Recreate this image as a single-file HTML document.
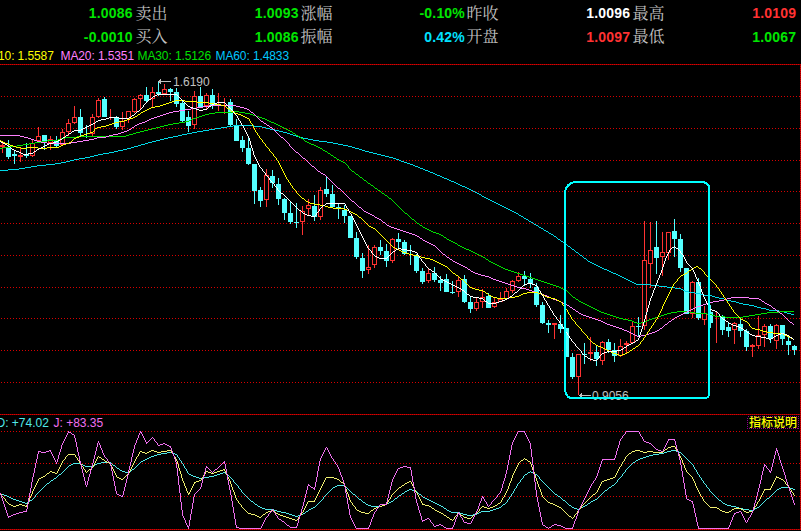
<!DOCTYPE html>
<html lang="zh"><head><meta charset="utf-8"><title>K线图</title>
<style>
html,body{margin:0;padding:0;background:#000;overflow:hidden}
svg{display:block}
.n{font-family:"Liberation Sans",sans-serif;font-weight:bold;font-size:14px;letter-spacing:0.2px}
.l{font-family:"Liberation Serif","Noto Serif CJK SC",serif;font-size:16px;fill:#c0c0c0}
.m{font-family:"Liberation Sans",sans-serif;font-size:12px}
.g{shape-rendering:crispEdges}
.ma{fill:none;stroke-width:1;shape-rendering:crispEdges}
</style></head><body>
<svg width="801" height="531" viewBox="0 0 801 531">
<rect width="801" height="531" fill="#000"/>
<g class="g" stroke="#d80000" stroke-width="1" fill="none">
<path stroke="#900000" d="M0 64.5H801M0 414.5H801M0 529.5H801M800.5 64V530"/>
<line x1="0" y1="64.5" x2="801" y2="64.5" stroke-dasharray="1 1"/>
<line x1="0" y1="96.5" x2="801" y2="96.5" stroke-dasharray="1 2" stroke-dashoffset="2"/>
<line x1="0" y1="128.5" x2="801" y2="128.5" stroke-dasharray="1 2" stroke-dashoffset="2"/>
<line x1="0" y1="160.5" x2="801" y2="160.5" stroke-dasharray="1 2" stroke-dashoffset="2"/>
<line x1="0" y1="191.5" x2="801" y2="191.5" stroke-dasharray="1 2" stroke-dashoffset="2"/>
<line x1="0" y1="223.5" x2="801" y2="223.5" stroke-dasharray="1 2" stroke-dashoffset="2"/>
<line x1="0" y1="255.5" x2="801" y2="255.5" stroke-dasharray="1 2" stroke-dashoffset="2"/>
<line x1="0" y1="287.5" x2="801" y2="287.5" stroke-dasharray="1 2" stroke-dashoffset="2"/>
<line x1="0" y1="318.5" x2="801" y2="318.5" stroke-dasharray="1 2" stroke-dashoffset="2"/>
<line x1="0" y1="350.5" x2="801" y2="350.5" stroke-dasharray="1 2" stroke-dashoffset="2"/>
<line x1="0" y1="382.5" x2="801" y2="382.5" stroke-dasharray="1 2" stroke-dashoffset="2"/>
<line x1="0" y1="414.5" x2="801" y2="414.5" stroke-dasharray="1 1"/>
<line x1="0" y1="431.5" x2="801" y2="431.5" stroke-dasharray="1 2" stroke-dashoffset="2"/>
<line x1="0" y1="463.5" x2="801" y2="463.5" stroke-dasharray="1 2" stroke-dashoffset="2"/>
<line x1="0" y1="496.5" x2="801" y2="496.5" stroke-dasharray="1 2" stroke-dashoffset="2"/>
<line x1="0" y1="529.5" x2="801" y2="529.5" stroke-dasharray="1 1"/>
<line x1="800.5" y1="64" x2="800.5" y2="530" stroke-dasharray="1 1"/>
</g>
<g class="g">
<rect x="2" y="143" width="1" height="2" fill="#ff3232"/><rect x="2" y="147" width="1" height="6" fill="#ff3232"/><rect x="0" y="145" width="5" height="2" fill="#ff3232"/>
<rect x="8" y="140" width="1" height="19" fill="#54ffff"/><rect x="6" y="148" width="5" height="9" fill="#54ffff"/>
<rect x="14" y="151" width="1" height="13" fill="#54ffff"/><rect x="12" y="154" width="5" height="2" fill="#54ffff"/>
<rect x="20" y="148" width="1" height="7" fill="#ff3232"/><rect x="20" y="157" width="1" height="5" fill="#ff3232"/><rect x="18" y="155" width="5" height="2" fill="#ff3232"/>
<rect x="26" y="143" width="1" height="15" fill="#54ffff"/><rect x="24" y="154" width="5" height="2" fill="#54ffff"/>
<rect x="32" y="139" width="1" height="4" fill="#ff3232"/><rect x="32" y="156" width="1" height="1" fill="#ff3232"/><rect x="30.5" y="143.5" width="4" height="12" fill="#000" stroke="#ff3232" stroke-width="1"/>
<rect x="38" y="127" width="1" height="9" fill="#ff3232"/><rect x="38" y="141" width="1" height="1" fill="#ff3232"/><rect x="36.5" y="136.5" width="4" height="4" fill="#000" stroke="#ff3232" stroke-width="1"/>
<rect x="44" y="135" width="1" height="15" fill="#54ffff"/><rect x="42" y="135" width="5" height="6" fill="#54ffff"/>
<rect x="50" y="136" width="1" height="3" fill="#ff3232"/><rect x="50" y="143" width="1" height="7" fill="#ff3232"/><rect x="48.5" y="139.5" width="4" height="3" fill="#000" stroke="#ff3232" stroke-width="1"/>
<rect x="56" y="136" width="1" height="11" fill="#54ffff"/><rect x="54" y="141" width="5" height="5" fill="#54ffff"/>
<rect x="62" y="129" width="1" height="3" fill="#ff3232"/><rect x="62" y="145" width="1" height="1" fill="#ff3232"/><rect x="60.5" y="132.5" width="4" height="12" fill="#000" stroke="#ff3232" stroke-width="1"/>
<rect x="68" y="119" width="1" height="4" fill="#ff3232"/><rect x="68" y="132" width="1" height="4" fill="#ff3232"/><rect x="66.5" y="123.5" width="4" height="8" fill="#000" stroke="#ff3232" stroke-width="1"/>
<rect x="74" y="106" width="1" height="11" fill="#ff3232"/><rect x="74" y="123" width="1" height="1" fill="#ff3232"/><rect x="72.5" y="117.5" width="4" height="5" fill="#000" stroke="#ff3232" stroke-width="1"/>
<rect x="80" y="109" width="1" height="27" fill="#54ffff"/><rect x="78" y="117" width="5" height="16" fill="#54ffff"/>
<rect x="86" y="125" width="1" height="13" fill="#54ffff"/><rect x="92" y="114" width="1" height="3" fill="#ff3232"/><rect x="92" y="134" width="1" height="3" fill="#ff3232"/><rect x="90.5" y="117.5" width="4" height="16" fill="#000" stroke="#ff3232" stroke-width="1"/>
<rect x="98" y="98" width="1" height="2" fill="#ff3232"/><rect x="98" y="117" width="1" height="1" fill="#ff3232"/><rect x="96.5" y="100.5" width="4" height="16" fill="#000" stroke="#ff3232" stroke-width="1"/>
<rect x="104" y="97" width="1" height="20" fill="#54ffff"/><rect x="102" y="99" width="5" height="18" fill="#54ffff"/>
<rect x="110" y="109" width="1" height="11" fill="#ff3232"/><rect x="116" y="116" width="1" height="13" fill="#54ffff"/><rect x="114" y="117" width="5" height="10" fill="#54ffff"/>
<rect x="122" y="112" width="1" height="9" fill="#ff3232"/><rect x="122" y="127" width="1" height="3" fill="#ff3232"/><rect x="120.5" y="121.5" width="4" height="5" fill="#000" stroke="#ff3232" stroke-width="1"/>
<rect x="128" y="119" width="1" height="4" fill="#ff3232"/><rect x="126.5" y="111.5" width="4" height="7" fill="#000" stroke="#ff3232" stroke-width="1"/>
<rect x="134" y="98" width="1" height="1" fill="#ff3232"/><rect x="134" y="112" width="1" height="1" fill="#ff3232"/><rect x="132.5" y="99.5" width="4" height="12" fill="#000" stroke="#ff3232" stroke-width="1"/>
<rect x="140" y="94" width="1" height="1" fill="#ff3232"/><rect x="140" y="99" width="1" height="10" fill="#ff3232"/><rect x="138.5" y="95.5" width="4" height="3" fill="#000" stroke="#ff3232" stroke-width="1"/>
<rect x="146" y="87" width="1" height="15" fill="#54ffff"/><rect x="144" y="95" width="5" height="6" fill="#54ffff"/>
<rect x="152" y="87" width="1" height="5" fill="#ff3232"/><rect x="152" y="99" width="1" height="9" fill="#ff3232"/><rect x="150.5" y="92.5" width="4" height="6" fill="#000" stroke="#ff3232" stroke-width="1"/>
<rect x="158" y="81" width="1" height="15" fill="#54ffff"/><rect x="156" y="92" width="5" height="2" fill="#54ffff"/>
<rect x="164" y="84" width="1" height="5" fill="#ff3232"/><rect x="164" y="94" width="1" height="1" fill="#ff3232"/><rect x="162.5" y="89.5" width="4" height="4" fill="#000" stroke="#ff3232" stroke-width="1"/>
<rect x="170" y="88" width="1" height="13" fill="#54ffff"/><rect x="168" y="89" width="5" height="3" fill="#54ffff"/>
<rect x="176" y="88" width="1" height="19" fill="#54ffff"/><rect x="174" y="92" width="5" height="12" fill="#54ffff"/>
<rect x="182" y="101" width="1" height="21" fill="#54ffff"/><rect x="180" y="103" width="5" height="18" fill="#54ffff"/>
<rect x="188" y="111" width="1" height="21" fill="#54ffff"/><rect x="186" y="117" width="5" height="9" fill="#54ffff"/>
<rect x="194" y="91" width="1" height="5" fill="#ff3232"/><rect x="194" y="125" width="1" height="4" fill="#ff3232"/><rect x="192.5" y="96.5" width="4" height="28" fill="#000" stroke="#ff3232" stroke-width="1"/>
<rect x="200" y="87" width="1" height="21" fill="#54ffff"/><rect x="198" y="96" width="5" height="11" fill="#54ffff"/>
<rect x="206" y="93" width="1" height="2" fill="#ff3232"/><rect x="206" y="106" width="1" height="3" fill="#ff3232"/><rect x="204.5" y="95.5" width="4" height="10" fill="#000" stroke="#ff3232" stroke-width="1"/>
<rect x="212" y="89" width="1" height="20" fill="#54ffff"/><rect x="210" y="95" width="5" height="10" fill="#54ffff"/>
<rect x="218" y="93" width="1" height="18" fill="#ff3232"/><rect x="224" y="98" width="1" height="16" fill="#ff3232"/><rect x="230" y="99" width="1" height="27" fill="#54ffff"/><rect x="228" y="102" width="5" height="23" fill="#54ffff"/>
<rect x="236" y="119" width="1" height="22" fill="#54ffff"/><rect x="234" y="125" width="5" height="16" fill="#54ffff"/>
<rect x="242" y="136" width="1" height="16" fill="#54ffff"/><rect x="240" y="140" width="5" height="8" fill="#54ffff"/>
<rect x="248" y="138" width="1" height="27" fill="#54ffff"/><rect x="246" y="148" width="5" height="16" fill="#54ffff"/>
<rect x="254" y="164" width="1" height="40" fill="#54ffff"/><rect x="252" y="164" width="5" height="27" fill="#54ffff"/>
<rect x="260" y="187" width="1" height="20" fill="#54ffff"/><rect x="258" y="190" width="5" height="11" fill="#54ffff"/>
<rect x="266" y="169" width="1" height="6" fill="#ff3232"/><rect x="266" y="200" width="1" height="7" fill="#ff3232"/><rect x="264.5" y="175.5" width="4" height="24" fill="#000" stroke="#ff3232" stroke-width="1"/>
<rect x="272" y="170" width="1" height="18" fill="#54ffff"/><rect x="270" y="176" width="5" height="7" fill="#54ffff"/>
<rect x="278" y="178" width="1" height="27" fill="#54ffff"/><rect x="276" y="184" width="5" height="15" fill="#54ffff"/>
<rect x="284" y="198" width="1" height="22" fill="#54ffff"/><rect x="282" y="199" width="5" height="14" fill="#54ffff"/>
<rect x="290" y="202" width="1" height="22" fill="#54ffff"/><rect x="288" y="213" width="5" height="9" fill="#54ffff"/>
<rect x="296" y="203" width="1" height="25" fill="#54ffff"/><rect x="294" y="222" width="5" height="1" fill="#54ffff"/>
<rect x="302" y="206" width="1" height="5" fill="#ff3232"/><rect x="302" y="222" width="1" height="13" fill="#ff3232"/><rect x="300.5" y="211.5" width="4" height="10" fill="#000" stroke="#ff3232" stroke-width="1"/>
<rect x="308" y="199" width="1" height="6" fill="#ff3232"/><rect x="308" y="209" width="1" height="7" fill="#ff3232"/><rect x="306.5" y="205.5" width="4" height="3" fill="#000" stroke="#ff3232" stroke-width="1"/>
<rect x="314" y="195" width="1" height="26" fill="#54ffff"/><rect x="312" y="206" width="5" height="11" fill="#54ffff"/>
<rect x="320" y="187" width="1" height="3" fill="#ff3232"/><rect x="320" y="217" width="1" height="3" fill="#ff3232"/><rect x="318.5" y="190.5" width="4" height="26" fill="#000" stroke="#ff3232" stroke-width="1"/>
<rect x="326" y="177" width="1" height="20" fill="#54ffff"/><rect x="324" y="189" width="5" height="5" fill="#54ffff"/>
<rect x="332" y="185" width="1" height="22" fill="#54ffff"/><rect x="330" y="194" width="5" height="13" fill="#54ffff"/>
<rect x="338" y="204" width="1" height="15" fill="#54ffff"/><rect x="336" y="207" width="5" height="2" fill="#54ffff"/>
<rect x="344" y="205" width="1" height="18" fill="#54ffff"/><rect x="342" y="210" width="5" height="6" fill="#54ffff"/>
<rect x="350" y="216" width="1" height="22" fill="#54ffff"/><rect x="348" y="216" width="5" height="22" fill="#54ffff"/>
<rect x="356" y="232" width="1" height="27" fill="#54ffff"/><rect x="354" y="238" width="5" height="19" fill="#54ffff"/>
<rect x="362" y="253" width="1" height="25" fill="#54ffff"/><rect x="360" y="258" width="5" height="13" fill="#54ffff"/>
<rect x="368" y="245" width="1" height="22" fill="#ff3232"/><rect x="368" y="270" width="1" height="4" fill="#ff3232"/><rect x="366.5" y="267.5" width="4" height="2" fill="#000" stroke="#ff3232" stroke-width="1"/>
<rect x="374" y="245" width="1" height="2" fill="#ff3232"/><rect x="374" y="265" width="1" height="3" fill="#ff3232"/><rect x="372.5" y="247.5" width="4" height="17" fill="#000" stroke="#ff3232" stroke-width="1"/>
<rect x="380" y="240" width="1" height="15" fill="#54ffff"/><rect x="378" y="247" width="5" height="4" fill="#54ffff"/>
<rect x="386" y="244" width="1" height="23" fill="#54ffff"/><rect x="384" y="251" width="5" height="10" fill="#54ffff"/>
<rect x="392" y="238" width="1" height="1" fill="#ff3232"/><rect x="392" y="261" width="1" height="2" fill="#ff3232"/><rect x="390.5" y="239.5" width="4" height="21" fill="#000" stroke="#ff3232" stroke-width="1"/>
<rect x="398" y="233" width="1" height="16" fill="#54ffff"/><rect x="396" y="239" width="5" height="3" fill="#54ffff"/>
<rect x="404" y="240" width="1" height="15" fill="#54ffff"/><rect x="402" y="242" width="5" height="12" fill="#54ffff"/>
<rect x="410" y="245" width="1" height="20" fill="#54ffff"/><rect x="416" y="254" width="1" height="19" fill="#54ffff"/><rect x="414" y="256" width="5" height="15" fill="#54ffff"/>
<rect x="422" y="268" width="1" height="16" fill="#54ffff"/><rect x="420" y="271" width="5" height="11" fill="#54ffff"/>
<rect x="428" y="269" width="1" height="4" fill="#ff3232"/><rect x="428" y="281" width="1" height="2" fill="#ff3232"/><rect x="426.5" y="273.5" width="4" height="7" fill="#000" stroke="#ff3232" stroke-width="1"/>
<rect x="434" y="267" width="1" height="15" fill="#54ffff"/><rect x="432" y="273" width="5" height="7" fill="#54ffff"/>
<rect x="440" y="276" width="1" height="15" fill="#54ffff"/><rect x="438" y="280" width="5" height="3" fill="#54ffff"/>
<rect x="446" y="274" width="1" height="18" fill="#54ffff"/><rect x="444" y="279" width="5" height="13" fill="#54ffff"/>
<rect x="452" y="281" width="1" height="13" fill="#54ffff"/><rect x="450" y="292" width="5" height="1" fill="#54ffff"/>
<rect x="458" y="277" width="1" height="3" fill="#ff3232"/><rect x="458" y="292" width="1" height="5" fill="#ff3232"/><rect x="456.5" y="280.5" width="4" height="11" fill="#000" stroke="#ff3232" stroke-width="1"/>
<rect x="464" y="275" width="1" height="28" fill="#54ffff"/><rect x="462" y="279" width="5" height="23" fill="#54ffff"/>
<rect x="470" y="297" width="1" height="16" fill="#54ffff"/><rect x="468" y="302" width="5" height="7" fill="#54ffff"/>
<rect x="476" y="298" width="1" height="4" fill="#ff3232"/><rect x="476" y="309" width="1" height="2" fill="#ff3232"/><rect x="474.5" y="302.5" width="4" height="6" fill="#000" stroke="#ff3232" stroke-width="1"/>
<rect x="482" y="289" width="1" height="8" fill="#ff3232"/><rect x="482" y="302" width="1" height="6" fill="#ff3232"/><rect x="480.5" y="297.5" width="4" height="4" fill="#000" stroke="#ff3232" stroke-width="1"/>
<rect x="488" y="293" width="1" height="15" fill="#54ffff"/><rect x="486" y="296" width="5" height="12" fill="#54ffff"/>
<rect x="494" y="297" width="1" height="5" fill="#ff3232"/><rect x="494" y="307" width="1" height="1" fill="#ff3232"/><rect x="492.5" y="302.5" width="4" height="4" fill="#000" stroke="#ff3232" stroke-width="1"/>
<rect x="500" y="292" width="1" height="7" fill="#ff3232"/><rect x="498.5" y="299.5" width="4" height="2" fill="#000" stroke="#ff3232" stroke-width="1"/>
<rect x="506" y="288" width="1" height="3" fill="#ff3232"/><rect x="506" y="299" width="1" height="1" fill="#ff3232"/><rect x="504.5" y="291.5" width="4" height="7" fill="#000" stroke="#ff3232" stroke-width="1"/>
<rect x="512" y="280" width="1" height="1" fill="#ff3232"/><rect x="512" y="291" width="1" height="2" fill="#ff3232"/><rect x="510.5" y="281.5" width="4" height="9" fill="#000" stroke="#ff3232" stroke-width="1"/>
<rect x="518" y="272" width="1" height="4" fill="#ff3232"/><rect x="518" y="281" width="1" height="1" fill="#ff3232"/><rect x="516.5" y="276.5" width="4" height="4" fill="#000" stroke="#ff3232" stroke-width="1"/>
<rect x="524" y="271" width="1" height="15" fill="#54ffff"/><rect x="522" y="276" width="5" height="3" fill="#54ffff"/>
<rect x="530" y="273" width="1" height="15" fill="#54ffff"/><rect x="528" y="279" width="5" height="5" fill="#54ffff"/>
<rect x="536" y="283" width="1" height="24" fill="#54ffff"/><rect x="534" y="287" width="5" height="18" fill="#54ffff"/>
<rect x="542" y="302" width="1" height="22" fill="#54ffff"/><rect x="540" y="305" width="5" height="18" fill="#54ffff"/>
<rect x="548" y="320" width="1" height="13" fill="#54ffff"/><rect x="546" y="323" width="5" height="2" fill="#54ffff"/>
<rect x="554" y="325" width="1" height="14" fill="#ff3232"/><rect x="552" y="323" width="5" height="2" fill="#ff3232"/>
<rect x="560" y="315" width="1" height="18" fill="#54ffff"/><rect x="558" y="324" width="5" height="5" fill="#54ffff"/>
<rect x="566" y="328" width="1" height="29" fill="#54ffff"/><rect x="564" y="328" width="5" height="29" fill="#54ffff"/>
<rect x="572" y="353" width="1" height="26" fill="#54ffff"/><rect x="570" y="357" width="5" height="20" fill="#54ffff"/>
<rect x="578" y="377" width="1" height="18" fill="#ff3232"/><rect x="576.5" y="354.5" width="4" height="22" fill="#000" stroke="#ff3232" stroke-width="1"/>
<rect x="584" y="343" width="1" height="21" fill="#54ffff"/><rect x="582" y="354" width="5" height="1" fill="#54ffff"/>
<rect x="590" y="337" width="1" height="15" fill="#ff3232"/><rect x="590" y="354" width="1" height="7" fill="#ff3232"/><rect x="588" y="352" width="5" height="2" fill="#ff3232"/>
<rect x="596" y="345" width="1" height="21" fill="#54ffff"/><rect x="594" y="352" width="5" height="7" fill="#54ffff"/>
<rect x="602" y="341" width="1" height="1" fill="#ff3232"/><rect x="602" y="361" width="1" height="4" fill="#ff3232"/><rect x="600.5" y="342.5" width="4" height="18" fill="#000" stroke="#ff3232" stroke-width="1"/>
<rect x="608" y="339" width="1" height="14" fill="#54ffff"/><rect x="606" y="342" width="5" height="8" fill="#54ffff"/>
<rect x="614" y="343" width="1" height="19" fill="#54ffff"/><rect x="612" y="350" width="5" height="6" fill="#54ffff"/>
<rect x="620" y="339" width="1" height="7" fill="#ff3232"/><rect x="620" y="356" width="1" height="1" fill="#ff3232"/><rect x="618.5" y="346.5" width="4" height="9" fill="#000" stroke="#ff3232" stroke-width="1"/>
<rect x="626" y="341" width="1" height="2" fill="#ff3232"/><rect x="626" y="345" width="1" height="9" fill="#ff3232"/><rect x="624" y="343" width="5" height="2" fill="#ff3232"/>
<rect x="632" y="322" width="1" height="4" fill="#ff3232"/><rect x="630.5" y="326.5" width="4" height="16" fill="#000" stroke="#ff3232" stroke-width="1"/>
<rect x="638" y="317" width="1" height="20" fill="#54ffff"/><rect x="636" y="326" width="5" height="1" fill="#54ffff"/>
<rect x="644" y="221" width="1" height="39" fill="#ff3232"/><rect x="644" y="326" width="1" height="4" fill="#ff3232"/><rect x="642.5" y="260.5" width="4" height="65" fill="#000" stroke="#ff3232" stroke-width="1"/>
<rect x="650" y="222" width="1" height="28" fill="#ff3232"/><rect x="650" y="264" width="1" height="24" fill="#ff3232"/><rect x="648.5" y="250.5" width="4" height="13" fill="#000" stroke="#ff3232" stroke-width="1"/>
<rect x="656" y="221" width="1" height="53" fill="#54ffff"/><rect x="654" y="247" width="5" height="11" fill="#54ffff"/>
<rect x="662" y="232" width="1" height="20" fill="#ff3232"/><rect x="662" y="257" width="1" height="19" fill="#ff3232"/><rect x="660.5" y="252.5" width="4" height="4" fill="#000" stroke="#ff3232" stroke-width="1"/>
<rect x="668" y="253" width="1" height="7" fill="#ff3232"/><rect x="666.5" y="232.5" width="4" height="20" fill="#000" stroke="#ff3232" stroke-width="1"/>
<rect x="674" y="219" width="1" height="38" fill="#54ffff"/><rect x="672" y="231" width="5" height="8" fill="#54ffff"/>
<rect x="680" y="234" width="1" height="38" fill="#54ffff"/><rect x="678" y="239" width="5" height="29" fill="#54ffff"/>
<rect x="686" y="268" width="1" height="46" fill="#54ffff"/><rect x="684" y="268" width="5" height="46" fill="#54ffff"/>
<rect x="692" y="281" width="1" height="1" fill="#ff3232"/><rect x="692" y="314" width="1" height="4" fill="#ff3232"/><rect x="690.5" y="282.5" width="4" height="31" fill="#000" stroke="#ff3232" stroke-width="1"/>
<rect x="698" y="278" width="1" height="42" fill="#54ffff"/><rect x="696" y="282" width="5" height="36" fill="#54ffff"/>
<rect x="704" y="306" width="1" height="7" fill="#ff3232"/><rect x="704" y="320" width="1" height="5" fill="#ff3232"/><rect x="702.5" y="313.5" width="4" height="6" fill="#000" stroke="#ff3232" stroke-width="1"/>
<rect x="710" y="305" width="1" height="23" fill="#54ffff"/><rect x="708" y="312" width="5" height="11" fill="#54ffff"/>
<rect x="716" y="312" width="1" height="31" fill="#ff3232"/><rect x="722" y="315" width="1" height="20" fill="#54ffff"/><rect x="720" y="317" width="5" height="13" fill="#54ffff"/>
<rect x="728" y="323" width="1" height="14" fill="#54ffff"/><rect x="726" y="327" width="5" height="4" fill="#54ffff"/>
<rect x="734" y="322" width="1" height="1" fill="#ff3232"/><rect x="734" y="330" width="1" height="14" fill="#ff3232"/><rect x="732.5" y="323.5" width="4" height="6" fill="#000" stroke="#ff3232" stroke-width="1"/>
<rect x="740" y="319" width="1" height="18" fill="#54ffff"/><rect x="738" y="324" width="5" height="7" fill="#54ffff"/>
<rect x="746" y="329" width="1" height="22" fill="#54ffff"/><rect x="744" y="331" width="5" height="16" fill="#54ffff"/>
<rect x="752" y="344" width="1" height="1" fill="#ff3232"/><rect x="752" y="347" width="1" height="10" fill="#ff3232"/><rect x="750" y="345" width="5" height="2" fill="#ff3232"/>
<rect x="758" y="316" width="1" height="19" fill="#ff3232"/><rect x="758" y="346" width="1" height="3" fill="#ff3232"/><rect x="756.5" y="335.5" width="4" height="10" fill="#000" stroke="#ff3232" stroke-width="1"/>
<rect x="764" y="324" width="1" height="2" fill="#ff3232"/><rect x="764" y="335" width="1" height="12" fill="#ff3232"/><rect x="762.5" y="326.5" width="4" height="8" fill="#000" stroke="#ff3232" stroke-width="1"/>
<rect x="770" y="324" width="1" height="19" fill="#54ffff"/><rect x="768" y="326" width="5" height="13" fill="#54ffff"/>
<rect x="776" y="324" width="1" height="1" fill="#ff3232"/><rect x="776" y="341" width="1" height="8" fill="#ff3232"/><rect x="774.5" y="325.5" width="4" height="15" fill="#000" stroke="#ff3232" stroke-width="1"/>
<rect x="782" y="325" width="1" height="20" fill="#54ffff"/><rect x="780" y="325" width="5" height="14" fill="#54ffff"/>
<rect x="788" y="337" width="1" height="18" fill="#54ffff"/><rect x="786" y="341" width="5" height="4" fill="#54ffff"/>
<rect x="794" y="345" width="1" height="10" fill="#54ffff"/><rect x="792" y="346" width="5" height="4" fill="#54ffff"/>
</g>
<path class="ma" stroke="#00d8e8" d="M233 125.5h21M227 126.5h6M254 126.5h8M221 127.5h6M262 127.5h4M215 128.5h6M266 128.5h4M209 129.5h6M270 129.5h5M203 130.5h6M275 130.5h4M197 131.5h6M279 131.5h4M192 132.5h5M283 132.5h4M187 133.5h5M287 133.5h3M182 134.5h5M290 134.5h3M178 135.5h4M293 135.5h3M173 136.5h5M296 136.5h3M168 137.5h5M299 137.5h4M164 138.5h4M303 138.5h5M160 139.5h4M308 139.5h5M156 140.5h4M313 140.5h6M152 141.5h4M319 141.5h8M148 142.5h4M327 142.5h6M145 143.5h3M333 143.5h5M141 144.5h4M338 144.5h5M138 145.5h3M343 145.5h5M134 146.5h4M348 146.5h4M131 147.5h3M352 147.5h3M127 148.5h4M355 148.5h4M123 149.5h4M359 149.5h3M118 150.5h5M362 150.5h3M114 151.5h4M365 151.5h4M109 152.5h5M369 152.5h4M103 153.5h6M373 153.5h4M98 154.5h5M377 154.5h4M94 155.5h4M381 155.5h4M90 156.5h4M385 156.5h4M85 157.5h5M389 157.5h4M79 158.5h6M393 158.5h3M74 159.5h5M396 159.5h3M70 160.5h4M399 160.5h2M66 161.5h4M401 161.5h3M61 162.5h5M404 162.5h3M55 163.5h6M407 163.5h3M46 164.5h9M410 164.5h3M37 165.5h9M413 165.5h2M31 166.5h6M415 166.5h3M25 167.5h6M418 167.5h2M19 168.5h6M420 168.5h3M8 169.5h11M423 169.5h2M0 170.5h8M425 170.5h3M428 171.5h2M430 172.5h3M433 173.5h2M435 174.5h2M437 175.5h3M440 176.5h2M442 177.5h2M444 178.5h3M447 179.5h2M449 180.5h2M451 181.5h3M454 182.5h2M456 183.5h2M458 184.5h2M460 185.5h2M462 186.5h3M465 187.5h2M467 188.5h2M469 189.5h2M471 190.5h2M473 191.5h2M475 192.5h2M477 193.5h2M479 194.5h2M482 196.5h2M484 197.5h2M486 198.5h2M488 199.5h2M490 200.5h2M492 201.5h2M494 202.5h2M496 203.5h2M498 204.5h2M500 205.5h2M502 206.5h2M504 207.5h2M506 208.5h2M508 209.5h2M510 210.5h2M512 211.5h2M514 212.5h2M516 213.5h2M519 215.5h2M521 216.5h2M524 218.5h2M526 219.5h2M529 221.5h2M531 222.5h2M534 224.5h2M536 225.5h2M539 227.5h2M541 228.5h2M544 230.5h2M546 231.5h2M549 233.5h2M551 234.5h2M554 236.5h2M558 239.5h2M561 241.5h2M565 244.5h2M568 246.5h2M572 249.5h2M576 252.5h2M580 255.5h2M584 258.5h2M588 261.5h2M590 262.5h2M592 263.5h2M594 264.5h2M596 265.5h2M598 266.5h2M600 267.5h2M602 268.5h2M604 269.5h3M607 270.5h2M609 271.5h2M611 272.5h2M613 273.5h3M616 274.5h2M618 275.5h2M620 276.5h2M622 277.5h2M624 278.5h2M626 279.5h2M628 280.5h2M630 281.5h2M632 282.5h2M634 283.5h2M636 284.5h15M651 285.5h8M659 286.5h8M667 287.5h8M675 288.5h6M681 289.5h2M683 290.5h2M685 291.5h4M689 292.5h6M695 293.5h5M700 294.5h3M703 295.5h9M712 296.5h3M715 297.5h4M719 298.5h5M724 299.5h3M727 300.5h4M731 301.5h5M736 302.5h3M739 303.5h4M743 304.5h6M749 305.5h5M754 306.5h3M757 307.5h4M761 308.5h5M766 309.5h3M769 310.5h10M779 311.5h5M784 312.5h3M787 313.5h4M791 314.5h3M481.5 195v1M518.5 214v1M523.5 217v1M528.5 220v1M533.5 223v1M538.5 226v1M543.5 229v1M548.5 232v1M553.5 235v1M556.5 237v1M557.5 238v1M560.5 240v1M563.5 242v1M564.5 243v1M567.5 245v1M570.5 247v1M571.5 248v1M574.5 250v1M575.5 251v1M578.5 253v1M579.5 254v1M582.5 256v1M583.5 257v1M586.5 259v1M587.5 260v1"/>
<path class="ma" stroke="#00e000" d="M233 111.5h6M215 112.5h18M239 112.5h6M209 113.5h6M245 113.5h5M205 114.5h4M250 114.5h3M202 115.5h3M253 115.5h3M199 116.5h3M256 116.5h3M196 117.5h3M259 117.5h3M193 118.5h3M262 118.5h3M191 119.5h2M265 119.5h2M189 120.5h2M267 120.5h2M185 121.5h4M269 121.5h2M179 122.5h6M271 122.5h3M173 123.5h6M274 123.5h2M168 124.5h5M276 124.5h2M164 125.5h4M278 125.5h2M160 126.5h4M280 126.5h2M156 127.5h4M282 127.5h2M152 128.5h4M284 128.5h2M148 129.5h4M286 129.5h2M144 130.5h4M288 130.5h2M140 131.5h4M290 131.5h2M136 132.5h4M133 133.5h3M293 133.5h2M129 134.5h4M126 135.5h3M296 135.5h2M77 136.5h49M298 136.5h2M65 137.5h12M61 138.5h4M301 138.5h2M58 139.5h3M47 140.5h11M41 141.5h6M305 141.5h2M35 142.5h6M307 142.5h2M29 143.5h6M309 143.5h2M23 144.5h6M311 144.5h3M17 145.5h6M314 145.5h2M10 146.5h7M316 146.5h2M3 147.5h7M318 147.5h2M0 148.5h3M320 148.5h2M323 150.5h2M325 151.5h2M328 153.5h2M331 155.5h2M334 157.5h2M337 159.5h2M339 160.5h2M341 161.5h2M343 162.5h2M352 171.5h2M356 174.5h2M360 177.5h2M364 180.5h2M368 183.5h2M371 185.5h2M375 188.5h2M378 190.5h2M382 193.5h2M385 195.5h2M389 198.5h2M405 213.5h2M412 219.5h2M417 223.5h2M420 225.5h2M423 227.5h2M425 228.5h2M427 229.5h2M429 230.5h2M431 231.5h2M433 232.5h3M436 233.5h3M439 234.5h2M441 235.5h2M444 237.5h2M447 239.5h2M449 240.5h2M451 241.5h2M453 242.5h2M455 243.5h2M458 245.5h2M460 246.5h2M462 247.5h2M464 248.5h2M466 249.5h3M469 250.5h2M471 251.5h2M473 252.5h2M475 253.5h2M477 254.5h2M479 255.5h2M481 256.5h2M483 257.5h2M486 259.5h2M489 261.5h2M491 262.5h2M493 263.5h2M495 264.5h2M497 265.5h2M499 266.5h2M501 267.5h2M503 268.5h2M505 269.5h3M508 270.5h3M511 271.5h3M514 272.5h3M517 273.5h3M520 274.5h3M523 275.5h3M526 276.5h3M529 277.5h3M532 278.5h3M535 279.5h3M538 280.5h3M541 281.5h3M544 282.5h3M547 283.5h3M550 284.5h3M553 285.5h3M556 286.5h3M559 287.5h2M561 288.5h2M563 289.5h2M565 290.5h2M573 297.5h2M576 299.5h2M579 301.5h2M581 302.5h2M583 303.5h2M585 304.5h2M587 305.5h2M589 306.5h2M591 307.5h2M593 308.5h2M595 309.5h2M597 310.5h2M599 311.5h2M677 311.5h12M779 311.5h15M601 312.5h3M671 312.5h6M689 312.5h6M767 312.5h12M604 313.5h3M667 313.5h4M695 313.5h12M761 313.5h6M607 314.5h3M664 314.5h3M707 314.5h5M755 314.5h6M610 315.5h3M661 315.5h3M712 315.5h3M749 315.5h6M613 316.5h3M658 316.5h3M715 316.5h10M743 316.5h6M616 317.5h3M655 317.5h3M725 317.5h18M619 318.5h4M652 318.5h3M623 319.5h5M649 319.5h3M628 320.5h4M647 320.5h2M632 321.5h2M645 321.5h2M634 322.5h3M641 322.5h4M637 323.5h4M292.5 132v1M295.5 134v1M300.5 137v1M303.5 139v1M304.5 140v1M322.5 149v1M327.5 152v1M330.5 154v1M333.5 156v1M336.5 158v1M345.5 163v1M346.5 164v1M347.5 165v1M348.5 166v2M349.5 168v1M350.5 169v1M351.5 170v1M354.5 172v1M355.5 173v1M358.5 175v1M359.5 176v1M362.5 178v1M363.5 179v1M366.5 181v1M367.5 182v1M370.5 184v1M373.5 186v1M374.5 187v1M377.5 189v1M380.5 191v1M381.5 192v1M384.5 194v1M387.5 196v1M388.5 197v1M391.5 199v1M392.5 200v1M393.5 201v1M394.5 202v1M395.5 203v1M396.5 204v1M397.5 205v1M398.5 206v1M399.5 207v1M400.5 208v1M401.5 209v1M402.5 210v1M403.5 211v1M404.5 212v1M407.5 214v1M408.5 215v1M409.5 216v1M410.5 217v1M411.5 218v1M414.5 220v1M415.5 221v1M416.5 222v1M419.5 224v1M422.5 226v1M443.5 236v1M446.5 238v1M457.5 244v1M485.5 258v1M488.5 260v1M567.5 291v1M568.5 292v1M569.5 293v1M570.5 294v1M571.5 295v1M572.5 296v1M575.5 298v1M578.5 300v1"/>
<path class="ma" stroke="#ff80ff" d="M209 105.5h27M203 106.5h6M236 106.5h4M197 107.5h6M240 107.5h4M191 108.5h6M244 108.5h3M185 109.5h6M247 109.5h2M179 110.5h6M173 111.5h6M169 112.5h4M251 112.5h2M166 113.5h3M163 114.5h3M160 115.5h3M157 116.5h3M154 117.5h3M151 118.5h3M149 119.5h2M147 120.5h2M145 121.5h2M261 121.5h2M142 122.5h3M139 123.5h3M264 123.5h2M137 124.5h2M135 125.5h2M267 125.5h2M132 127.5h2M270 127.5h2M129 129.5h2M127 130.5h2M124 131.5h3M121 132.5h3M118 133.5h3M113 134.5h5M0 135.5h20M109 135.5h4M20 136.5h4M106 136.5h3M24 137.5h4M97 137.5h9M281 137.5h2M28 138.5h3M94 138.5h3M31 139.5h3M89 139.5h5M34 140.5h3M83 140.5h6M37 141.5h4M77 141.5h6M41 142.5h6M71 142.5h6M47 143.5h24M296 152.5h2M303 158.5h2M312 166.5h2M318 171.5h2M321 173.5h2M323 174.5h2M338 188.5h2M352 201.5h2M359 207.5h2M364 211.5h2M366 212.5h2M368 213.5h2M370 214.5h2M372 215.5h2M375 217.5h2M377 218.5h2M379 219.5h2M383 222.5h2M387 225.5h2M389 226.5h2M391 227.5h3M394 228.5h3M397 229.5h3M400 230.5h3M403 231.5h3M406 232.5h3M409 233.5h3M412 234.5h3M415 235.5h2M417 236.5h2M420 238.5h2M423 240.5h2M425 241.5h2M427 242.5h2M429 243.5h2M431 244.5h2M433 245.5h2M443 254.5h2M447 257.5h2M450 259.5h2M453 261.5h2M455 262.5h2M457 263.5h2M459 264.5h2M461 265.5h2M463 266.5h2M465 267.5h2M468 269.5h2M471 271.5h2M473 272.5h2M475 273.5h3M478 274.5h3M481 275.5h4M485 276.5h4M489 277.5h2M491 278.5h2M493 279.5h3M496 280.5h3M499 281.5h3M502 282.5h3M505 283.5h3M508 284.5h3M511 285.5h3M514 286.5h3M517 287.5h4M521 288.5h5M526 289.5h3M529 290.5h3M532 291.5h3M535 292.5h3M538 293.5h3M541 294.5h3M544 295.5h3M547 296.5h2M549 297.5h2M731 297.5h18M551 298.5h2M727 298.5h4M749 298.5h10M553 299.5h3M724 299.5h3M759 299.5h2M556 300.5h3M719 300.5h5M559 301.5h2M713 301.5h6M762 301.5h2M561 302.5h2M709 302.5h4M563 303.5h2M706 303.5h3M765 303.5h2M565 304.5h2M703 304.5h3M767 304.5h2M567 305.5h2M700 305.5h3M769 305.5h2M697 306.5h3M570 307.5h2M695 307.5h2M693 308.5h2M773 308.5h2M573 309.5h2M691 309.5h2M689 310.5h2M576 311.5h2M687 311.5h2M777 311.5h2M685 312.5h2M579 313.5h2M683 313.5h2M780 313.5h2M581 314.5h2M681 314.5h2M583 315.5h3M679 315.5h2M586 316.5h3M677 316.5h2M589 317.5h3M675 317.5h2M592 318.5h3M595 319.5h3M672 319.5h2M598 320.5h3M601 321.5h2M669 321.5h2M603 322.5h2M790 322.5h2M605 323.5h2M607 324.5h3M665 324.5h2M610 325.5h3M613 326.5h3M616 327.5h3M619 328.5h3M660 328.5h2M622 329.5h2M624 330.5h3M657 330.5h2M627 331.5h2M655 331.5h2M629 332.5h2M652 332.5h3M631 333.5h2M649 333.5h3M633 334.5h2M646 334.5h3M635 335.5h2M641 335.5h5M637 336.5h4M131.5 128v1M134.5 126v1M249.5 110v1M250.5 111v1M253.5 113v1M254.5 114v1M255.5 115v1M256.5 116v1M257.5 117v1M258.5 118v1M259.5 119v1M260.5 120v1M263.5 122v1M266.5 124v1M269.5 126v1M272.5 128v1M273.5 129v1M274.5 130v1M275.5 131v1M276.5 132v1M277.5 133v1M278.5 134v1M279.5 135v1M280.5 136v1M283.5 138v1M284.5 139v1M285.5 140v1M286.5 141v1M287.5 142v1M288.5 143v1M289.5 144v2M290.5 146v1M291.5 147v1M292.5 148v1M293.5 149v1M294.5 150v1M295.5 151v1M298.5 153v1M299.5 154v1M300.5 155v1M301.5 156v1M302.5 157v1M305.5 159v1M306.5 160v1M307.5 161v1M308.5 162v1M309.5 163v1M310.5 164v1M311.5 165v1M314.5 167v1M315.5 168v1M316.5 169v1M317.5 170v1M320.5 172v1M325.5 175v1M326.5 176v1M327.5 177v1M328.5 178v1M329.5 179v1M330.5 180v1M331.5 181v1M332.5 182v1M333.5 183v1M334.5 184v1M335.5 185v1M336.5 186v1M337.5 187v1M340.5 189v1M341.5 190v1M342.5 191v1M343.5 192v1M344.5 193v1M345.5 194v1M346.5 195v1M347.5 196v1M348.5 197v1M349.5 198v1M350.5 199v1M351.5 200v1M354.5 202v1M355.5 203v1M356.5 204v1M357.5 205v1M358.5 206v1M361.5 208v1M362.5 209v1M363.5 210v1M374.5 216v1M381.5 220v1M382.5 221v1M385.5 223v1M386.5 224v1M419.5 237v1M422.5 239v1M435.5 246v1M436.5 247v1M437.5 248v1M438.5 249v1M439.5 250v1M440.5 251v1M441.5 252v1M442.5 253v1M445.5 255v1M446.5 256v1M449.5 258v1M452.5 260v1M467.5 268v1M470.5 270v1M569.5 306v1M572.5 308v1M575.5 310v1M578.5 312v1M659.5 329v1M662.5 327v1M663.5 326v1M664.5 325v1M667.5 323v1M668.5 322v1M671.5 320v1M674.5 318v1M761.5 300v1M764.5 302v1M771.5 306v1M772.5 307v1M775.5 309v1M776.5 310v1M779.5 312v1M782.5 314v1M783.5 315v1M784.5 316v1M785.5 317v1M786.5 318v1M787.5 319v1M788.5 320v1M789.5 321v1M792.5 323v1M793.5 324v1"/>
<path class="ma" stroke="#ffff00" d="M175 100.5h10M172 101.5h3M185 101.5h12M169 102.5h3M197 102.5h12M166 103.5h3M209 103.5h6M163 104.5h3M215 104.5h6M160 105.5h3M221 105.5h4M155 106.5h5M151 107.5h4M149 108.5h2M227 108.5h2M147 109.5h2M145 110.5h2M143 111.5h2M231 111.5h2M141 112.5h2M233 112.5h2M235 113.5h3M138 114.5h2M238 114.5h3M241 115.5h2M135 116.5h2M243 116.5h2M133 117.5h2M245 117.5h2M130 118.5h3M247 118.5h2M127 119.5h3M124 120.5h3M119 121.5h5M115 122.5h4M112 123.5h3M109 124.5h3M106 125.5h3M101 126.5h5M97 127.5h4M95 128.5h2M90 132.5h3M87 133.5h3M84 134.5h3M81 135.5h3M79 136.5h2M76 137.5h3M74 138.5h2M1 141.5h2M3 142.5h2M69 142.5h2M5 143.5h3M66 143.5h3M8 144.5h2M63 144.5h3M10 145.5h3M61 145.5h2M13 146.5h3M59 146.5h2M16 147.5h5M27 147.5h11M47 147.5h12M21 148.5h6M38 148.5h9M302 198.5h2M306 201.5h2M308 202.5h2M310 203.5h4M314 204.5h6M320 205.5h5M325 206.5h3M328 207.5h5M333 208.5h11M344 209.5h3M347 210.5h2M349 211.5h2M351 212.5h2M353 213.5h2M355 214.5h2M359 217.5h2M369 226.5h2M371 227.5h2M373 228.5h2M393 247.5h2M395 248.5h2M397 249.5h2M399 250.5h2M401 251.5h2M403 252.5h3M406 253.5h3M409 254.5h4M413 255.5h5M418 256.5h3M421 257.5h4M425 258.5h5M430 259.5h3M433 260.5h2M435 261.5h2M437 262.5h2M439 263.5h2M441 264.5h2M443 265.5h2M445 266.5h2M696 266.5h2M694 267.5h2M692 268.5h2M699 268.5h2M689 270.5h2M453 273.5h2M685 273.5h2M683 274.5h2M456 275.5h2M681 275.5h2M461 279.5h2M470 287.5h2M472 288.5h3M475 289.5h4M479 290.5h4M483 291.5h2M527 292.5h11M486 293.5h2M523 293.5h4M538 293.5h3M521 294.5h2M541 294.5h2M489 295.5h2M519 295.5h2M543 295.5h2M491 296.5h2M515 296.5h4M545 296.5h2M493 297.5h4M509 297.5h6M547 297.5h4M497 298.5h12M551 298.5h4M555 299.5h2M557 300.5h2M559 301.5h2M741 319.5h2M743 320.5h2M745 321.5h2M752 328.5h3M755 329.5h5M760 330.5h3M763 331.5h4M767 332.5h6M773 333.5h10M783 334.5h2M785 335.5h2M787 336.5h2M789 337.5h2M791 338.5h2M593 343.5h2M596 345.5h2M598 346.5h3M636 346.5h2M601 347.5h2M603 348.5h2M633 348.5h2M605 349.5h2M607 350.5h2M630 350.5h2M609 351.5h2M611 352.5h2M627 352.5h2M613 353.5h3M625 353.5h2M616 354.5h3M622 354.5h3M619 355.5h3M0.5 140v1M71.5 141v1M72.5 140v1M73.5 139v1M93.5 131v1M94.5 129v2M137.5 115v1M140.5 113v1M225.5 106v1M226.5 107v1M229.5 109v1M230.5 110v1M249.5 119v2M250.5 121v2M251.5 123v1M252.5 124v2M253.5 126v2M254.5 128v2M255.5 130v2M256.5 132v1M257.5 133v2M258.5 135v1M259.5 136v2M260.5 138v1M261.5 139v1M262.5 140v2M263.5 142v1M264.5 143v1M265.5 144v2M266.5 146v1M267.5 147v1M268.5 148v1M269.5 149v2M270.5 151v1M271.5 152v1M272.5 153v1M273.5 154v2M274.5 156v1M275.5 157v1M276.5 158v2M277.5 160v1M278.5 161v2M279.5 163v2M280.5 165v2M281.5 167v2M282.5 169v2M283.5 171v2M284.5 173v2M285.5 175v2M286.5 177v2M287.5 179v1M288.5 180v2M289.5 182v1M290.5 183v2M291.5 185v1M292.5 186v2M293.5 188v1M294.5 189v1M295.5 190v1M296.5 191v2M297.5 193v1M298.5 194v1M299.5 195v1M300.5 196v1M301.5 197v1M304.5 199v1M305.5 200v1M357.5 215v1M358.5 216v1M361.5 218v1M362.5 219v1M363.5 220v1M364.5 221v1M365.5 222v1M366.5 223v1M367.5 224v1M368.5 225v1M375.5 229v1M376.5 230v1M377.5 231v1M378.5 232v1M379.5 233v1M380.5 234v1M381.5 235v1M382.5 236v1M383.5 237v1M384.5 238v1M385.5 239v1M386.5 240v1M387.5 241v1M388.5 242v1M389.5 243v1M390.5 244v1M391.5 245v1M392.5 246v1M447.5 267v1M448.5 268v1M449.5 269v1M450.5 270v1M451.5 271v1M452.5 272v1M455.5 274v1M458.5 276v1M459.5 277v1M460.5 278v1M463.5 280v1M464.5 281v1M465.5 282v1M466.5 283v1M467.5 284v1M468.5 285v1M469.5 286v1M485.5 292v1M488.5 294v1M561.5 302v1M562.5 303v2M563.5 305v1M564.5 306v1M565.5 307v2M566.5 309v1M567.5 310v2M568.5 312v2M569.5 314v1M570.5 315v2M571.5 317v2M572.5 319v1M573.5 320v1M574.5 321v1M575.5 322v2M576.5 324v1M577.5 325v1M578.5 326v1M579.5 327v1M580.5 328v1M581.5 329v2M582.5 331v1M583.5 332v1M584.5 333v1M585.5 334v1M586.5 335v1M587.5 336v2M588.5 338v1M589.5 339v1M590.5 340v1M591.5 341v1M592.5 342v1M595.5 344v1M629.5 351v1M632.5 349v1M635.5 347v1M638.5 345v1M639.5 344v1M640.5 342v2M641.5 341v1M642.5 340v1M643.5 338v2M644.5 337v1M645.5 335v2M646.5 334v1M647.5 332v2M648.5 331v1M649.5 329v2M650.5 328v1M651.5 326v2M652.5 325v1M653.5 323v2M654.5 322v1M655.5 320v2M656.5 319v1M657.5 317v2M658.5 315v2M659.5 313v2M660.5 311v2M661.5 309v2M662.5 306v3M663.5 304v2M664.5 302v2M665.5 300v2M666.5 298v2M667.5 296v2M668.5 294v2M669.5 292v2M670.5 290v2M671.5 288v2M672.5 286v2M673.5 284v2M674.5 283v1M675.5 282v1M676.5 281v1M677.5 279v2M678.5 278v1M679.5 277v1M680.5 276v1M687.5 272v1M688.5 271v1M691.5 269v1M698.5 267v1M701.5 269v1M702.5 270v1M703.5 271v1M704.5 272v2M705.5 274v1M706.5 275v1M707.5 276v1M708.5 277v1M709.5 278v1M710.5 279v1M711.5 280v1M712.5 281v1M713.5 282v1M714.5 283v1M715.5 284v1M716.5 285v2M717.5 287v1M718.5 288v1M719.5 289v2M720.5 291v1M721.5 292v2M722.5 294v1M723.5 295v2M724.5 297v1M725.5 298v2M726.5 300v1M727.5 301v2M728.5 303v1M729.5 304v2M730.5 306v1M731.5 307v2M732.5 309v1M733.5 310v2M734.5 312v1M735.5 313v1M736.5 314v1M737.5 315v1M738.5 316v1M739.5 317v1M740.5 318v1M747.5 322v1M748.5 323v1M749.5 324v2M750.5 326v1M751.5 327v1M793.5 339v1"/>
<path class="ma" stroke="#ffffff" d="M157 94.5h20M155 95.5h2M153 96.5h2M149 99.5h2M217 102.5h8M214 103.5h3M212 104.5h2M188 106.5h2M209 106.5h2M190 107.5h3M193 108.5h3M196 109.5h3M203 109.5h4M199 110.5h4M137 111.5h2M132 115.5h2M109 117.5h10M129 117.5h2M106 118.5h3M119 118.5h10M101 119.5h5M98 120.5h3M96 121.5h2M93 123.5h2M91 124.5h2M89 125.5h2M87 126.5h2M85 127.5h2M83 128.5h2M81 129.5h2M74 130.5h7M72 131.5h2M69 133.5h2M66 135.5h2M63 137.5h2M60 139.5h2M58 140.5h2M56 141.5h2M1 142.5h2M53 142.5h3M3 143.5h2M49 143.5h4M5 144.5h2M47 144.5h2M45 145.5h2M8 146.5h2M43 146.5h2M41 147.5h2M39 148.5h2M12 149.5h2M37 149.5h2M14 150.5h2M16 151.5h3M34 151.5h2M19 152.5h2M21 153.5h2M28 153.5h5M23 154.5h5M281 193.5h2M326 203.5h19M323 205.5h2M299 210.5h2M303 213.5h2M305 214.5h2M307 215.5h4M311 216.5h4M672 247.5h2M398 248.5h3M676 248.5h2M396 249.5h2M401 249.5h6M407 250.5h5M393 251.5h2M412 251.5h3M415 252.5h2M375 256.5h2M377 257.5h2M379 258.5h8M429 269.5h2M432 271.5h2M441 279.5h2M443 280.5h2M445 281.5h2M447 282.5h2M449 283.5h2M527 283.5h5M451 284.5h2M524 284.5h3M532 284.5h3M453 285.5h2M535 285.5h2M455 286.5h2M457 287.5h2M459 288.5h2M462 290.5h2M515 292.5h2M467 294.5h2M470 296.5h3M510 296.5h2M473 297.5h6M479 298.5h4M507 298.5h2M505 299.5h2M502 300.5h3M485 301.5h2M499 301.5h3M496 302.5h3M488 303.5h8M710 309.5h2M712 310.5h3M715 311.5h2M723 319.5h2M726 321.5h2M729 323.5h2M731 324.5h2M733 325.5h3M736 326.5h3M739 327.5h2M741 328.5h2M744 330.5h2M747 332.5h2M781 333.5h3M750 334.5h2M778 334.5h3M784 334.5h3M752 335.5h3M776 335.5h2M787 335.5h2M755 336.5h6M774 336.5h2M761 337.5h5M790 337.5h2M766 338.5h3M771 338.5h2M769 339.5h2M636 340.5h2M633 342.5h2M631 343.5h2M629 344.5h2M627 345.5h2M624 347.5h2M621 349.5h2M617 350.5h4M607 351.5h10M604 352.5h3M602 353.5h2M585 356.5h2M588 358.5h2M590 359.5h3M593 360.5h4M0.5 141v1M7.5 145v1M10.5 147v1M11.5 148v1M33.5 152v1M36.5 150v1M62.5 138v1M65.5 136v1M68.5 134v1M71.5 132v1M95.5 122v1M131.5 116v1M134.5 114v1M135.5 113v1M136.5 112v1M139.5 110v1M140.5 109v1M141.5 108v1M142.5 107v1M143.5 105v2M144.5 104v1M145.5 103v1M146.5 102v1M147.5 101v1M148.5 100v1M151.5 98v1M152.5 97v1M177.5 95v1M178.5 96v1M179.5 97v1M180.5 98v1M181.5 99v1M182.5 100v1M183.5 101v1M184.5 102v1M185.5 103v1M186.5 104v1M187.5 105v1M207.5 108v1M208.5 107v1M211.5 105v1M225.5 103v1M226.5 104v1M227.5 105v1M228.5 106v1M229.5 107v1M230.5 108v1M231.5 109v1M232.5 110v1M233.5 111v2M234.5 113v1M235.5 114v1M236.5 115v1M237.5 116v2M238.5 118v2M239.5 120v1M240.5 121v2M241.5 123v2M242.5 125v1M243.5 126v2M244.5 128v2M245.5 130v2M246.5 132v2M247.5 134v2M248.5 136v2M249.5 138v3M250.5 141v4M251.5 145v3M252.5 148v3M253.5 151v4M254.5 155v2M255.5 157v2M256.5 159v2M257.5 161v2M258.5 163v2M259.5 165v2M260.5 167v1M261.5 168v1M262.5 169v2M263.5 171v1M264.5 172v1M265.5 173v2M266.5 175v1M267.5 176v1M268.5 177v1M269.5 178v2M270.5 180v1M271.5 181v1M272.5 182v1M273.5 183v1M274.5 184v2M275.5 186v1M276.5 187v1M277.5 188v2M278.5 190v1M279.5 191v1M280.5 192v1M283.5 194v1M284.5 195v1M285.5 196v1M286.5 197v1M287.5 198v1M288.5 199v1M289.5 200v1M290.5 201v1M291.5 202v1M292.5 203v1M293.5 204v1M294.5 205v1M295.5 206v1M296.5 207v1M297.5 208v1M298.5 209v1M301.5 211v1M302.5 212v1M315.5 215v1M316.5 213v2M317.5 212v1M318.5 211v1M319.5 209v2M320.5 208v1M321.5 207v1M322.5 206v1M325.5 204v1M345.5 204v2M346.5 206v2M347.5 208v1M348.5 209v2M349.5 211v2M350.5 213v1M351.5 214v2M352.5 216v2M353.5 218v2M354.5 220v2M355.5 222v2M356.5 224v2M357.5 226v2M358.5 228v2M359.5 230v2M360.5 232v2M361.5 234v2M362.5 236v2M363.5 238v2M364.5 240v2M365.5 242v2M366.5 244v2M367.5 246v2M368.5 248v1M369.5 249v1M370.5 250v1M371.5 251v2M372.5 253v1M373.5 254v1M374.5 255v1M387.5 257v1M388.5 256v1M389.5 255v1M390.5 254v1M391.5 253v1M392.5 252v1M395.5 250v1M417.5 253v2M418.5 255v1M419.5 256v2M420.5 258v1M421.5 259v2M422.5 261v1M423.5 262v1M424.5 263v1M425.5 264v2M426.5 266v1M427.5 267v1M428.5 268v1M431.5 270v1M434.5 272v1M435.5 273v1M436.5 274v1M437.5 275v1M438.5 276v1M439.5 277v1M440.5 278v1M461.5 289v1M464.5 291v1M465.5 292v1M466.5 293v1M469.5 295v1M483.5 299v1M484.5 300v1M487.5 302v1M509.5 297v1M512.5 295v1M513.5 294v1M514.5 293v1M517.5 291v1M518.5 290v1M519.5 289v1M520.5 288v1M521.5 287v1M522.5 286v1M523.5 285v1M537.5 286v2M538.5 288v2M539.5 290v1M540.5 291v2M541.5 293v2M542.5 295v1M543.5 296v2M544.5 298v2M545.5 300v1M546.5 301v2M547.5 303v2M548.5 305v1M549.5 306v2M550.5 308v2M551.5 310v1M552.5 311v2M553.5 313v2M554.5 315v1M555.5 316v1M556.5 317v2M557.5 319v1M558.5 320v1M559.5 321v2M560.5 323v1M561.5 324v2M562.5 326v1M563.5 327v2M564.5 329v1M565.5 330v2M566.5 332v1M567.5 333v2M568.5 335v1M569.5 336v2M570.5 338v1M571.5 339v2M572.5 341v1M573.5 342v1M574.5 343v1M575.5 344v2M576.5 346v1M577.5 347v1M578.5 348v1M579.5 349v1M580.5 350v1M581.5 351v2M582.5 353v1M583.5 354v1M584.5 355v1M587.5 357v1M597.5 359v1M598.5 358v1M599.5 356v2M600.5 355v1M601.5 354v1M623.5 348v1M626.5 346v1M635.5 341v1M638.5 338v2M639.5 335v3M640.5 332v3M641.5 329v3M642.5 326v3M643.5 322v4M644.5 319v3M645.5 315v4M646.5 312v3M647.5 308v4M648.5 305v3M649.5 301v4M650.5 298v3M651.5 296v2M652.5 293v3M653.5 290v3M654.5 288v2M655.5 285v3M656.5 283v2M657.5 280v3M658.5 278v2M659.5 275v3M660.5 273v2M661.5 270v3M662.5 267v3M663.5 264v3M664.5 261v3M665.5 258v3M666.5 256v2M667.5 254v2M668.5 252v2M669.5 250v2M670.5 249v1M671.5 248v1M674.5 246v1M675.5 247v1M678.5 249v1M679.5 250v1M680.5 251v2M681.5 253v1M682.5 254v1M683.5 255v2M684.5 257v2M685.5 259v2M686.5 261v2M687.5 263v1M688.5 264v1M689.5 265v1M690.5 266v1M691.5 267v1M692.5 268v2M693.5 270v2M694.5 272v2M695.5 274v3M696.5 277v2M697.5 279v2M698.5 281v3M699.5 284v2M700.5 286v3M701.5 289v3M702.5 292v2M703.5 294v3M704.5 297v2M705.5 299v2M706.5 301v2M707.5 303v2M708.5 305v2M709.5 307v2M717.5 312v1M718.5 313v1M719.5 314v2M720.5 316v1M721.5 317v1M722.5 318v1M725.5 320v1M728.5 322v1M743.5 329v1M746.5 331v1M749.5 333v1M773.5 337v1M789.5 336v1M792.5 338v1M793.5 339v1"/>
<g stroke="#c0c0c0" stroke-width="1" fill="#c0c0c0" class="g"><path d="M158 81.5H171M158.5 81.5l2-1.5v3z"/><path d="M579 395.5H591M579.5 395.5l2-1.5v3z"/></g>
<text class="m" x="173" y="86" fill="#c0c0c0">1.6190</text>
<text class="m" x="592" y="400" fill="#c0c0c0">0.9056</text>
<path class="g" d="M576 182H701A8 5 0 0 1 709 187V394A4 4 0 0 1 705 398H571A6 10 0 0 1 565 388V193A11 11 0 0 1 576 182Z" fill="none" stroke="#00ffff" stroke-width="2"/>
<path class="ma" stroke="#50e8e8" d="M671 450.5h5M667 451.5h4M676 451.5h3M167 452.5h5M664 452.5h3M679 452.5h2M161 453.5h6M172 453.5h3M659 453.5h5M157 454.5h4M175 454.5h2M653 454.5h6M154 455.5h3M649 455.5h4M151 456.5h3M646 456.5h3M149 457.5h2M643 457.5h3M147 458.5h2M640 458.5h3M145 459.5h2M638 459.5h2M143 460.5h2M636 460.5h2M141 461.5h2M101 462.5h10M633 462.5h2M73 463.5h8M97 463.5h4M71 464.5h2M81 464.5h2M95 464.5h2M69 465.5h2M83 465.5h2M93 465.5h2M113 465.5h2M85 466.5h8M117 468.5h2M132 469.5h2M120 470.5h2M122 471.5h3M129 471.5h2M125 472.5h4M223 472.5h2M528 472.5h2M531 472.5h2M220 473.5h3M533 473.5h2M59 474.5h2M189 474.5h2M217 474.5h3M525 474.5h2M535 474.5h2M191 475.5h2M214 475.5h3M227 475.5h2M193 476.5h3M209 476.5h5M196 477.5h3M203 477.5h6M54 478.5h2M199 478.5h4M51 480.5h2M47 483.5h2M337 485.5h8M612 485.5h2M335 486.5h2M333 487.5h2M609 487.5h2M781 487.5h9M779 488.5h2M790 488.5h3M409 489.5h3M777 489.5h2M793 489.5h2M407 490.5h2M412 490.5h3M605 490.5h2M405 491.5h2M415 491.5h2M402 493.5h2M1 494.5h3M353 494.5h2M419 494.5h2M555 494.5h2M4 495.5h3M399 495.5h2M7 496.5h2M558 496.5h2M9 497.5h2M423 497.5h2M11 498.5h2M395 498.5h2M425 498.5h2M767 498.5h2M13 499.5h3M359 499.5h2M427 499.5h2M595 499.5h2M16 500.5h3M30 500.5h2M429 500.5h2M563 500.5h2M593 500.5h2M719 500.5h2M19 501.5h3M251 501.5h2M391 501.5h2M431 501.5h2M591 501.5h2M22 502.5h3M27 502.5h2M363 502.5h2M389 502.5h2M433 502.5h2M25 503.5h2M387 503.5h2M435 503.5h2M588 503.5h2M723 503.5h2M255 504.5h2M366 504.5h2M385 504.5h2M437 504.5h2M503 504.5h2M725 504.5h2M368 505.5h3M382 505.5h3M439 505.5h2M569 505.5h2M585 505.5h2M727 505.5h4M258 506.5h2M371 506.5h11M441 506.5h2M583 506.5h2M731 506.5h5M260 507.5h2M313 507.5h2M499 507.5h2M572 507.5h2M581 507.5h2M736 507.5h3M757 507.5h2M262 508.5h3M311 508.5h2M444 508.5h2M496 508.5h3M574 508.5h3M579 508.5h2M739 508.5h4M755 508.5h2M265 509.5h9M309 509.5h2M493 509.5h3M577 509.5h2M743 509.5h6M753 509.5h2M274 510.5h3M447 510.5h2M490 510.5h3M749 510.5h4M277 511.5h4M306 511.5h2M449 511.5h2M481 511.5h9M281 512.5h5M451 512.5h9M479 512.5h2M286 513.5h3M303 513.5h2M460 513.5h3M477 513.5h2M289 514.5h3M301 514.5h2M463 514.5h4M473 514.5h4M292 515.5h3M298 515.5h3M467 515.5h6M295 516.5h3M0.5 493v1M29.5 501v1M32.5 499v1M33.5 498v1M34.5 497v1M35.5 495v2M36.5 494v1M37.5 493v1M38.5 492v1M39.5 491v1M40.5 490v1M41.5 489v1M42.5 488v1M43.5 487v1M44.5 486v1M45.5 485v1M46.5 484v1M49.5 482v1M50.5 481v1M53.5 479v1M56.5 477v1M57.5 476v1M58.5 475v1M61.5 473v1M62.5 472v1M63.5 471v1M64.5 470v1M65.5 469v1M66.5 468v1M67.5 467v1M68.5 466v1M111.5 463v1M112.5 464v1M115.5 466v1M116.5 467v1M119.5 469v1M131.5 470v1M134.5 468v1M135.5 467v1M136.5 466v1M137.5 465v1M138.5 464v1M139.5 463v1M140.5 462v1M177.5 455v2M178.5 457v1M179.5 458v2M180.5 460v1M181.5 461v2M182.5 463v1M183.5 464v2M184.5 466v2M185.5 468v1M186.5 469v2M187.5 471v2M188.5 473v1M225.5 473v1M226.5 474v1M229.5 476v1M230.5 477v1M231.5 478v1M232.5 479v1M233.5 480v2M234.5 482v1M235.5 483v1M236.5 484v1M237.5 485v1M238.5 486v2M239.5 488v1M240.5 489v1M241.5 490v2M242.5 492v1M243.5 493v1M244.5 494v1M245.5 495v1M246.5 496v1M247.5 497v1M248.5 498v1M249.5 499v1M250.5 500v1M253.5 502v1M254.5 503v1M257.5 505v1M305.5 512v1M308.5 510v1M315.5 506v1M316.5 505v1M317.5 504v1M318.5 503v1M319.5 502v1M320.5 501v1M321.5 500v1M322.5 499v1M323.5 497v2M324.5 496v1M325.5 495v1M326.5 494v1M327.5 493v1M328.5 492v1M329.5 491v1M330.5 490v1M331.5 489v1M332.5 488v1M345.5 486v1M346.5 487v1M347.5 488v1M348.5 489v1M349.5 490v1M350.5 491v1M351.5 492v1M352.5 493v1M355.5 495v1M356.5 496v1M357.5 497v1M358.5 498v1M361.5 500v1M362.5 501v1M365.5 503v1M393.5 500v1M394.5 499v1M397.5 497v1M398.5 496v1M401.5 494v1M404.5 492v1M417.5 492v1M418.5 493v1M421.5 495v1M422.5 496v1M443.5 507v1M446.5 509v1M501.5 506v1M502.5 505v1M505.5 503v1M506.5 502v1M507.5 500v2M508.5 499v1M509.5 497v2M510.5 496v1M511.5 494v2M512.5 493v1M513.5 491v2M514.5 489v2M515.5 488v1M516.5 486v2M517.5 484v2M518.5 483v1M519.5 482v1M520.5 480v2M521.5 479v1M522.5 478v1M523.5 476v2M524.5 475v1M527.5 473v1M530.5 471v1M537.5 475v1M538.5 476v1M539.5 477v2M540.5 479v1M541.5 480v1M542.5 481v1M543.5 482v1M544.5 483v1M545.5 484v1M546.5 485v1M547.5 486v1M548.5 487v1M549.5 488v1M550.5 489v1M551.5 490v1M552.5 491v1M553.5 492v1M554.5 493v1M557.5 495v1M560.5 497v1M561.5 498v1M562.5 499v1M565.5 501v1M566.5 502v1M567.5 503v1M568.5 504v1M571.5 506v1M587.5 504v1M590.5 502v1M597.5 498v1M598.5 497v1M599.5 496v1M600.5 495v1M601.5 494v1M602.5 493v1M603.5 492v1M604.5 491v1M607.5 489v1M608.5 488v1M611.5 486v1M614.5 484v1M615.5 483v1M616.5 482v1M617.5 480v2M618.5 479v1M619.5 478v1M620.5 477v1M621.5 476v1M622.5 474v2M623.5 473v1M624.5 472v1M625.5 470v2M626.5 469v1M627.5 468v1M628.5 467v1M629.5 466v1M630.5 465v1M631.5 464v1M632.5 463v1M635.5 461v1M681.5 453v1M682.5 454v1M683.5 455v1M684.5 456v1M685.5 457v1M686.5 458v1M687.5 459v1M688.5 460v1M689.5 461v1M690.5 462v1M691.5 463v1M692.5 464v1M693.5 465v2M694.5 467v2M695.5 469v1M696.5 470v2M697.5 472v2M698.5 474v1M699.5 475v2M700.5 477v1M701.5 478v2M702.5 480v1M703.5 481v2M704.5 483v1M705.5 484v1M706.5 485v2M707.5 487v1M708.5 488v1M709.5 489v2M710.5 491v1M711.5 492v1M712.5 493v1M713.5 494v1M714.5 495v1M715.5 496v1M716.5 497v1M717.5 498v1M718.5 499v1M721.5 501v1M722.5 502v1M759.5 506v1M760.5 505v1M761.5 504v1M762.5 503v1M763.5 502v1M764.5 501v1M765.5 500v1M766.5 499v1M769.5 497v1M770.5 496v1M771.5 495v1M772.5 494v1M773.5 493v1M774.5 492v1M775.5 491v1M776.5 490v1"/>
<path class="ma" stroke="#f0f070" d="M671 446.5h4M668 447.5h3M665 449.5h2M151 450.5h3M167 450.5h4M635 450.5h5M140 451.5h2M149 451.5h2M154 451.5h3M161 451.5h6M632 451.5h3M640 451.5h3M647 451.5h6M142 452.5h3M147 452.5h2M157 452.5h4M643 452.5h4M653 452.5h10M145 453.5h2M629 453.5h2M68 454.5h7M99 457.5h2M102 459.5h2M525 459.5h2M521 460.5h2M105 461.5h2M528 461.5h2M107 462.5h2M109 463.5h2M89 469.5h2M223 469.5h2M220 470.5h3M50 471.5h2M206 471.5h2M217 471.5h3M52 472.5h3M208 472.5h3M214 472.5h3M47 473.5h2M55 473.5h2M211 473.5h3M43 476.5h2M41 477.5h2M117 477.5h2M326 477.5h8M613 477.5h2M776 477.5h3M39 478.5h2M119 478.5h2M334 478.5h3M610 478.5h3M779 478.5h2M121 479.5h2M337 479.5h2M607 479.5h3M781 479.5h2M199 480.5h2M604 480.5h3M196 481.5h3M409 481.5h2M602 481.5h2M194 482.5h2M341 482.5h2M407 482.5h2M405 483.5h2M402 485.5h2M399 487.5h2M764 489.5h7M188 493.5h2M593 494.5h2M308 501.5h7M548 502.5h2M498 503.5h2M550 503.5h3M9 504.5h2M19 504.5h3M385 504.5h2M422 504.5h3M553 504.5h2M11 505.5h2M16 505.5h3M22 505.5h3M382 505.5h3M425 505.5h4M495 505.5h2M555 505.5h2M13 506.5h3M25 506.5h2M379 506.5h3M429 506.5h2M482 506.5h2M493 506.5h2M557 506.5h2M376 507.5h3M484 507.5h3M490 507.5h3M559 507.5h2M710 507.5h7M374 508.5h2M432 508.5h2M487 508.5h3M717 508.5h2M734 508.5h7M732 509.5h2M741 509.5h2M271 510.5h2M357 510.5h2M371 510.5h2M435 510.5h2M720 510.5h2M268 511.5h3M273 511.5h2M359 511.5h2M437 511.5h2M722 511.5h3M729 511.5h2M744 511.5h2M749 511.5h4M266 512.5h2M361 512.5h4M439 512.5h2M725 512.5h4M746 512.5h3M248 513.5h3M276 513.5h2M365 513.5h4M441 513.5h2M251 514.5h4M263 514.5h2M278 514.5h2M255 515.5h2M280 515.5h3M444 515.5h2M461 515.5h2M473 515.5h2M257 516.5h2M283 516.5h3M569 516.5h2M259 517.5h2M286 517.5h3M447 517.5h2M464 517.5h3M289 518.5h3M467 518.5h4M292 519.5h3M450 519.5h2M295 520.5h2M0.5 493v1M1.5 494v2M2.5 496v1M3.5 497v1M4.5 498v1M5.5 499v2M6.5 501v1M7.5 502v1M8.5 503v1M26.5 505v1M27.5 503v2M28.5 501v2M29.5 498v3M30.5 496v2M31.5 494v2M32.5 491v3M33.5 489v2M34.5 487v2M35.5 485v2M36.5 483v2M37.5 481v2M38.5 479v2M45.5 475v1M46.5 474v1M49.5 472v1M57.5 471v2M58.5 469v2M59.5 467v2M60.5 465v2M61.5 463v2M62.5 461v2M63.5 460v1M64.5 459v1M65.5 457v2M66.5 456v1M67.5 455v1M75.5 455v2M76.5 457v1M77.5 458v2M78.5 460v1M79.5 461v2M80.5 463v1M81.5 464v2M82.5 466v1M83.5 467v2M84.5 469v1M85.5 470v2M86.5 472v1M87.5 471v1M88.5 470v1M91.5 468v1M92.5 467v1M93.5 465v2M94.5 463v2M95.5 461v2M96.5 459v2M97.5 457v2M98.5 456v1M101.5 458v1M104.5 460v1M110.5 464v1M111.5 465v2M112.5 467v2M113.5 469v2M114.5 471v2M115.5 473v2M116.5 475v2M123.5 478v1M124.5 477v1M125.5 476v1M126.5 475v1M127.5 474v1M128.5 473v1M129.5 471v2M130.5 469v2M131.5 467v2M132.5 465v2M133.5 463v2M134.5 461v2M135.5 459v2M136.5 457v2M137.5 456v1M138.5 454v2M139.5 452v2M171.5 451v2M172.5 453v1M173.5 454v2M174.5 456v1M175.5 457v2M176.5 459v2M177.5 461v3M178.5 464v4M179.5 468v3M180.5 471v3M181.5 474v4M182.5 478v3M183.5 481v2M184.5 483v3M185.5 486v2M186.5 488v3M187.5 491v2M188.5 494v1M189.5 492v1M190.5 490v2M191.5 488v2M192.5 486v2M193.5 484v2M194.5 483v1M201.5 478v2M202.5 477v1M203.5 475v2M204.5 474v1M205.5 472v2M224.5 470v1M225.5 471v2M226.5 473v2M227.5 475v2M228.5 477v2M229.5 479v2M230.5 481v3M231.5 484v3M232.5 487v3M233.5 490v2M234.5 492v3M235.5 495v3M236.5 498v2M237.5 500v1M238.5 501v2M239.5 503v1M240.5 504v1M241.5 505v2M242.5 507v1M243.5 508v1M244.5 509v1M245.5 510v1M246.5 511v1M247.5 512v1M261.5 516v1M262.5 515v1M265.5 513v1M275.5 512v1M297.5 519v1M298.5 517v2M299.5 516v1M300.5 515v1M301.5 513v2M302.5 512v1M303.5 510v2M304.5 508v2M305.5 506v2M306.5 504v2M307.5 502v2M314.5 500v1M315.5 498v2M316.5 496v2M317.5 494v2M318.5 492v2M319.5 490v2M320.5 488v2M321.5 486v2M322.5 484v2M323.5 482v2M324.5 480v2M325.5 478v2M339.5 480v1M340.5 481v1M343.5 483v1M344.5 484v2M345.5 486v3M346.5 489v3M347.5 492v2M348.5 494v3M349.5 497v3M350.5 500v2M351.5 502v1M352.5 503v2M353.5 505v1M354.5 506v1M355.5 507v2M356.5 509v1M369.5 512v1M370.5 511v1M373.5 509v1M387.5 502v2M388.5 500v2M389.5 499v1M390.5 497v2M391.5 495v2M392.5 494v1M393.5 493v1M394.5 492v1M395.5 491v1M396.5 490v1M397.5 489v1M398.5 488v1M401.5 486v1M404.5 484v1M411.5 482v2M412.5 484v2M413.5 486v2M414.5 488v2M415.5 490v2M416.5 492v1M417.5 493v2M418.5 495v2M419.5 497v2M420.5 499v2M421.5 501v2M422.5 503v1M431.5 507v1M434.5 509v1M443.5 514v1M446.5 516v1M449.5 518v1M452.5 520v1M453.5 519v1M454.5 517v2M455.5 516v1M456.5 515v1M457.5 513v2M458.5 512v1M459.5 513v1M460.5 514v1M463.5 516v1M471.5 517v1M472.5 516v1M475.5 514v1M476.5 513v1M477.5 512v1M478.5 511v1M479.5 509v2M480.5 508v1M481.5 507v1M497.5 504v1M500.5 502v1M501.5 500v2M502.5 498v2M503.5 497v1M504.5 495v2M505.5 493v2M506.5 491v2M507.5 489v2M508.5 486v3M509.5 483v3M510.5 481v2M511.5 478v3M512.5 475v3M513.5 473v2M514.5 471v2M515.5 469v2M516.5 467v2M517.5 465v2M518.5 463v2M519.5 462v1M520.5 461v1M523.5 459v1M524.5 458v1M527.5 460v1M530.5 462v2M531.5 464v3M532.5 467v3M533.5 470v2M534.5 472v3M535.5 475v3M536.5 478v3M537.5 481v3M538.5 484v3M539.5 487v2M540.5 489v3M541.5 492v3M542.5 495v2M543.5 497v1M544.5 498v1M545.5 499v1M546.5 500v1M547.5 501v1M561.5 508v1M562.5 509v1M563.5 510v1M564.5 511v1M565.5 512v1M566.5 513v1M567.5 514v1M568.5 515v1M571.5 517v1M572.5 518v1M573.5 517v1M574.5 515v2M575.5 514v1M576.5 513v1M577.5 511v2M578.5 510v1M579.5 509v1M580.5 508v1M581.5 506v2M582.5 505v1M583.5 504v1M584.5 503v1M585.5 502v1M586.5 501v1M587.5 500v1M588.5 499v1M589.5 498v1M590.5 497v1M591.5 496v1M592.5 495v1M595.5 493v1M596.5 492v1M597.5 490v2M598.5 488v2M599.5 486v2M600.5 484v2M601.5 482v2M615.5 475v2M616.5 473v2M617.5 471v2M618.5 469v2M619.5 467v2M620.5 466v1M621.5 464v2M622.5 462v2M623.5 461v1M624.5 459v2M625.5 457v2M626.5 456v1M627.5 455v1M628.5 454v1M631.5 452v1M663.5 451v1M664.5 450v1M667.5 448v1M675.5 447v2M676.5 449v2M677.5 451v1M678.5 452v2M679.5 454v2M680.5 456v2M681.5 458v2M682.5 460v3M683.5 463v2M684.5 465v3M685.5 468v2M686.5 470v2M687.5 472v1M688.5 473v1M689.5 474v1M690.5 475v1M691.5 476v1M692.5 477v2M693.5 479v2M694.5 481v2M695.5 483v3M696.5 486v2M697.5 488v2M698.5 490v2M699.5 492v2M700.5 494v2M701.5 496v1M702.5 497v2M703.5 499v2M704.5 501v1M705.5 502v1M706.5 503v1M707.5 504v1M708.5 505v1M709.5 506v1M719.5 509v1M731.5 510v1M743.5 510v1M753.5 509v2M754.5 507v2M755.5 506v1M756.5 504v2M757.5 502v2M758.5 501v1M759.5 499v2M760.5 497v2M761.5 495v2M762.5 493v2M763.5 491v2M764.5 490v1M770.5 488v1M771.5 486v2M772.5 484v2M773.5 482v2M774.5 480v2M775.5 478v2M776.5 476v1M783.5 480v1M784.5 481v1M785.5 482v2M786.5 484v1M787.5 485v1M788.5 486v1M789.5 487v2M790.5 489v1M791.5 490v2M792.5 492v1M793.5 493v2M794.5 495v1"/>
<path class="ma" stroke="#f070f0" d="M518 431.5h7M626 431.5h13M68 432.5h3M140 432.5h2M72 434.5h2M668 439.5h7M644 441.5h2M146 442.5h2M646 442.5h3M163 443.5h2M649 443.5h2M160 444.5h3M165 444.5h2M158 445.5h2M167 445.5h2M169 446.5h2M656 449.5h2M49 450.5h2M658 450.5h3M776 450.5h2M38 451.5h3M46 451.5h3M661 451.5h2M41 452.5h5M602 459.5h13M223 462.5h2M764 465.5h2M403 466.5h4M206 467.5h2M400 467.5h3M407 467.5h4M398 468.5h2M215 469.5h2M769 471.5h2M308 485.5h2M311 487.5h2M313 488.5h2M117 494.5h2M119 495.5h2M121 496.5h2M482 497.5h2M687 499.5h2M689 500.5h2M691 501.5h2M380 504.5h7M23 511.5h4M739 511.5h2M19 512.5h4M736 512.5h3M16 513.5h3M458 513.5h2M734 513.5h2M13 514.5h3M11 515.5h2M8 516.5h3M427 518.5h2M279 519.5h2M425 519.5h2M422 520.5h3M282 521.5h2M464 522.5h3M467 523.5h4M439 524.5h2M554 524.5h3M287 525.5h2M436 525.5h3M441 525.5h2M543 525.5h2M552 525.5h2M557 525.5h4M187 526.5h2M434 526.5h2M561 526.5h2M236 527.5h3M290 527.5h7M444 527.5h2M546 527.5h2M549 527.5h2M563 527.5h2M239 528.5h22M356 528.5h13M446 528.5h7M565 528.5h8M698 528.5h31M0.5 493v2M1.5 495v3M2.5 498v3M3.5 501v3M4.5 504v3M5.5 507v3M6.5 510v3M7.5 513v3M8.5 517v1M26.5 509v2M27.5 504v5M28.5 498v6M29.5 493v5M30.5 488v5M31.5 482v6M32.5 477v5M33.5 473v4M34.5 468v5M35.5 463v5M36.5 459v4M37.5 454v5M38.5 452v2M50.5 451v1M51.5 452v2M52.5 454v2M53.5 456v2M54.5 458v2M55.5 460v2M56.5 462v2M57.5 459v3M58.5 455v4M59.5 452v3M60.5 449v3M61.5 445v4M62.5 443v2M63.5 441v2M64.5 439v2M65.5 437v2M66.5 435v2M67.5 433v2M68.5 431v1M71.5 433v1M74.5 435v3M75.5 438v4M76.5 442v5M77.5 447v5M78.5 452v4M79.5 456v5M80.5 461v4M81.5 465v4M82.5 469v4M83.5 473v4M84.5 477v4M85.5 481v4M86.5 485v2M87.5 481v4M88.5 477v4M89.5 474v3M90.5 470v4M91.5 466v4M92.5 463v3M93.5 459v4M94.5 455v4M95.5 451v4M96.5 447v4M97.5 443v4M98.5 441v2M99.5 443v2M100.5 445v3M101.5 448v2M102.5 450v3M103.5 453v2M104.5 455v2M105.5 457v1M106.5 458v1M107.5 459v2M108.5 461v1M109.5 462v1M110.5 463v3M111.5 466v5M112.5 471v5M113.5 476v5M114.5 481v5M115.5 486v5M116.5 491v3M122.5 495v1M123.5 491v4M124.5 487v4M125.5 483v4M126.5 479v4M127.5 475v4M128.5 470v5M129.5 466v4M130.5 462v4M131.5 457v5M132.5 453v4M133.5 449v4M134.5 445v4M135.5 443v2M136.5 440v3M137.5 438v2M138.5 435v3M139.5 433v2M140.5 431v1M141.5 433v1M142.5 434v2M143.5 436v2M144.5 438v2M145.5 440v2M146.5 443v1M148.5 441v1M149.5 440v1M150.5 439v1M151.5 438v1M152.5 437v1M153.5 438v1M154.5 439v2M155.5 441v1M156.5 442v1M157.5 443v2M170.5 447v1M171.5 448v3M172.5 451v3M173.5 454v2M174.5 456v3M175.5 459v3M176.5 462v6M177.5 468v8M178.5 476v9M179.5 485v8M180.5 493v9M181.5 502v8M182.5 510v6M183.5 516v2M184.5 518v2M185.5 520v3M186.5 523v2M187.5 525v1M188.5 527v2M189.5 520v6M190.5 514v6M191.5 509v5M192.5 503v6M193.5 497v6M194.5 494v3M195.5 493v1M196.5 492v1M197.5 491v1M198.5 490v1M199.5 489v1M200.5 487v2M201.5 483v4M202.5 479v4M203.5 476v3M204.5 472v4M205.5 468v4M206.5 466v1M208.5 468v1M209.5 469v1M210.5 470v1M211.5 471v1M212.5 472v1M213.5 471v1M214.5 470v1M217.5 468v1M218.5 467v1M219.5 466v1M220.5 465v1M221.5 464v1M222.5 463v1M224.5 461v1M224.5 463v1M225.5 464v5M226.5 469v5M227.5 474v6M228.5 480v5M229.5 485v5M230.5 490v5M231.5 495v6M232.5 501v6M233.5 507v6M234.5 513v6M235.5 519v6M236.5 525v2M261.5 526v2M262.5 524v2M263.5 522v2M264.5 520v2M265.5 518v2M266.5 517v1M267.5 516v1M268.5 514v2M269.5 513v1M270.5 512v1M271.5 510v2M272.5 509v1M273.5 510v2M274.5 512v1M275.5 513v2M276.5 515v1M277.5 516v2M278.5 518v1M281.5 520v1M284.5 522v1M285.5 523v1M286.5 524v1M289.5 526v1M296.5 526v1M297.5 523v3M298.5 519v4M299.5 516v3M300.5 513v3M301.5 509v4M302.5 506v3M303.5 502v4M304.5 498v4M305.5 494v4M306.5 490v4M307.5 486v4M308.5 484v1M310.5 486v1M314.5 487v1M314.5 489v1M315.5 482v5M316.5 477v5M317.5 471v6M318.5 466v5M319.5 461v5M320.5 458v3M321.5 456v2M322.5 454v2M323.5 452v2M324.5 450v2M325.5 448v2M326.5 447v1M327.5 448v2M328.5 450v2M329.5 452v2M330.5 454v2M331.5 456v2M332.5 458v1M333.5 459v2M334.5 461v1M335.5 462v2M336.5 464v1M337.5 465v2M338.5 467v2M339.5 469v3M340.5 472v3M341.5 475v2M342.5 477v3M343.5 480v3M344.5 483v4M345.5 487v6M346.5 493v5M347.5 498v6M348.5 504v5M349.5 509v6M350.5 515v3M351.5 518v2M352.5 520v2M353.5 522v2M354.5 524v2M355.5 526v2M368.5 527v1M369.5 525v2M370.5 522v3M371.5 519v3M372.5 517v2M373.5 514v3M374.5 512v2M375.5 511v1M376.5 509v2M377.5 508v1M378.5 507v1M379.5 505v2M386.5 502v2M387.5 498v4M388.5 494v4M389.5 490v4M390.5 486v4M391.5 482v4M392.5 479v3M393.5 477v2M394.5 475v2M395.5 473v2M396.5 471v2M397.5 469v2M410.5 468v2M411.5 470v6M412.5 476v6M413.5 482v5M414.5 487v6M415.5 493v6M416.5 499v4M417.5 503v3M418.5 506v4M419.5 510v3M420.5 513v3M421.5 516v4M422.5 521v1M429.5 519v1M430.5 520v2M431.5 522v1M432.5 523v1M433.5 524v2M443.5 526v1M452.5 527v1M453.5 525v2M454.5 522v3M455.5 519v3M456.5 517v2M457.5 514v3M458.5 512v1M459.5 514v1M460.5 515v2M461.5 517v1M462.5 518v2M463.5 520v2M471.5 521v2M472.5 519v2M473.5 517v2M474.5 515v2M475.5 513v2M476.5 511v2M477.5 509v2M478.5 506v3M479.5 503v3M480.5 501v2M481.5 498v3M482.5 496v1M483.5 498v1M484.5 499v2M485.5 501v1M486.5 502v2M487.5 504v2M488.5 506v1M489.5 505v1M490.5 504v1M491.5 502v2M492.5 501v1M493.5 500v1M494.5 499v1M495.5 498v1M496.5 497v1M497.5 495v2M498.5 494v1M499.5 493v1M500.5 491v2M501.5 488v3M502.5 484v4M503.5 481v3M504.5 478v3M505.5 474v4M506.5 470v4M507.5 465v5M508.5 460v5M509.5 455v5M510.5 450v5M511.5 445v5M512.5 442v3M513.5 440v2M514.5 438v2M515.5 436v2M516.5 434v2M517.5 432v2M524.5 432v1M525.5 433v2M526.5 435v2M527.5 437v2M528.5 439v2M529.5 441v2M530.5 443v6M531.5 449v8M532.5 457v8M533.5 465v9M534.5 474v8M535.5 482v8M536.5 490v7M537.5 497v5M538.5 502v5M539.5 507v5M540.5 512v5M541.5 517v5M542.5 522v3M545.5 526v1M548.5 528v1M551.5 526v1M572.5 527v1M573.5 524v3M574.5 521v3M575.5 519v2M576.5 516v3M577.5 513v3M578.5 510v3M579.5 508v2M580.5 506v2M581.5 504v2M582.5 502v2M583.5 500v2M584.5 498v2M585.5 496v2M586.5 494v2M587.5 492v2M588.5 490v2M589.5 488v2M590.5 486v2M591.5 484v2M592.5 483v1M593.5 481v2M594.5 480v1M595.5 478v2M596.5 476v2M597.5 473v3M598.5 470v3M599.5 467v3M600.5 464v3M601.5 461v3M602.5 460v1M614.5 458v1M615.5 455v3M616.5 451v4M617.5 448v3M618.5 445v3M619.5 441v4M620.5 439v2M621.5 438v1M622.5 436v2M623.5 435v1M624.5 434v1M625.5 432v2M639.5 432v2M640.5 434v2M641.5 436v1M642.5 437v2M643.5 439v2M651.5 444v1M652.5 445v1M653.5 446v1M654.5 447v1M655.5 448v1M663.5 449v2M664.5 447v2M665.5 445v2M666.5 443v2M667.5 441v2M668.5 440v1M674.5 440v1M675.5 441v4M676.5 445v4M677.5 449v3M678.5 452v4M679.5 456v4M680.5 460v5M681.5 465v6M682.5 471v6M683.5 477v6M684.5 483v6M685.5 489v6M686.5 495v4M692.5 502v2M693.5 504v4M694.5 508v5M695.5 513v4M696.5 517v5M697.5 522v4M698.5 526v2M728.5 527v1M729.5 525v2M730.5 522v3M731.5 520v2M732.5 517v3M733.5 515v2M734.5 514v1M741.5 512v2M742.5 514v2M743.5 516v2M744.5 518v2M745.5 520v2M746.5 522v1M747.5 520v2M748.5 518v2M749.5 517v1M750.5 515v2M751.5 513v2M752.5 511v2M753.5 507v4M754.5 503v4M755.5 500v3M756.5 496v4M757.5 492v4M758.5 488v4M759.5 484v4M760.5 480v4M761.5 475v5M762.5 471v4M763.5 467v4M764.5 464v1M764.5 466v1M766.5 466v2M767.5 468v1M768.5 469v1M769.5 470v1M770.5 472v1M771.5 467v4M772.5 463v4M773.5 459v4M774.5 455v4M775.5 451v4M776.5 448v2M777.5 451v2M778.5 453v3M779.5 456v4M780.5 460v3M781.5 463v3M782.5 466v3M783.5 469v3M784.5 472v3M785.5 475v4M786.5 479v3M787.5 482v3M788.5 485v3M789.5 488v3M790.5 491v3M791.5 494v3M792.5 497v3M793.5 500v3M794.5 503v2"/>
<text class="n" x="132.7" y="17.6" text-anchor="end" fill="#00e600">1.0086</text>
<text class="l" x="135.5" y="19">卖出</text>
<text class="n" x="132.7" y="41.6" text-anchor="end" fill="#00e600">-0.0010</text>
<text class="l" x="135.5" y="42.3">买入</text>
<text class="n" x="298.7" y="17.6" text-anchor="end" fill="#00e600">1.0093</text>
<text class="l" x="300.5" y="19">涨幅</text>
<text class="n" x="298.7" y="41.6" text-anchor="end" fill="#00e600">1.0086</text>
<text class="l" x="300.5" y="42.3">振幅</text>
<text class="n" x="465" y="17.6" text-anchor="end" fill="#00e600">-0.10%</text>
<text class="l" x="466.5" y="19">昨收</text>
<text class="n" x="465" y="41.6" text-anchor="end" fill="#00e0ff">0.42%</text>
<text class="l" x="466.5" y="42.3">开盘</text>
<text class="n" x="630.3" y="17.6" text-anchor="end" fill="#ffffff">1.0096</text>
<text class="l" x="632.5" y="19">最高</text>
<text class="n" x="630.3" y="41.6" text-anchor="end" fill="#ff3232">1.0097</text>
<text class="l" x="632.5" y="42.3">最低</text>
<text class="n" x="796.2" y="17.6" text-anchor="end" fill="#ff3232">1.0109</text>
<text class="n" x="796.2" y="41.6" text-anchor="end" fill="#00e600">1.0067</text>
<text class="m" y="59.5" style="letter-spacing:-0.1px"><tspan x="-2" fill="#ffff00">10: 1.5587</tspan><tspan x="60.5" fill="#ff80ff">MA20: 1.5351</tspan><tspan x="137.5" fill="#00e000">MA30: 1.5126</tspan><tspan x="215.5" fill="#00c8ff">MA60: 1.4833</tspan></text>
<text class="m" y="426.6"><tspan x="-3.5" fill="#50e8e8">D: +74.02</tspan><tspan x="53.5" fill="#f070f0">J: +83.35</tspan></text>
<rect x="747.5" y="416.5" width="51" height="12" fill="#000" stroke="#900090" stroke-width="1" stroke-dasharray="1 1" class="g"/>
<text x="749" y="427" fill="#ffff00" style="font-family:'Liberation Sans','Noto Sans CJK SC',sans-serif;font-size:12px;font-weight:500">指标说明</text>
</svg>
</body></html>
